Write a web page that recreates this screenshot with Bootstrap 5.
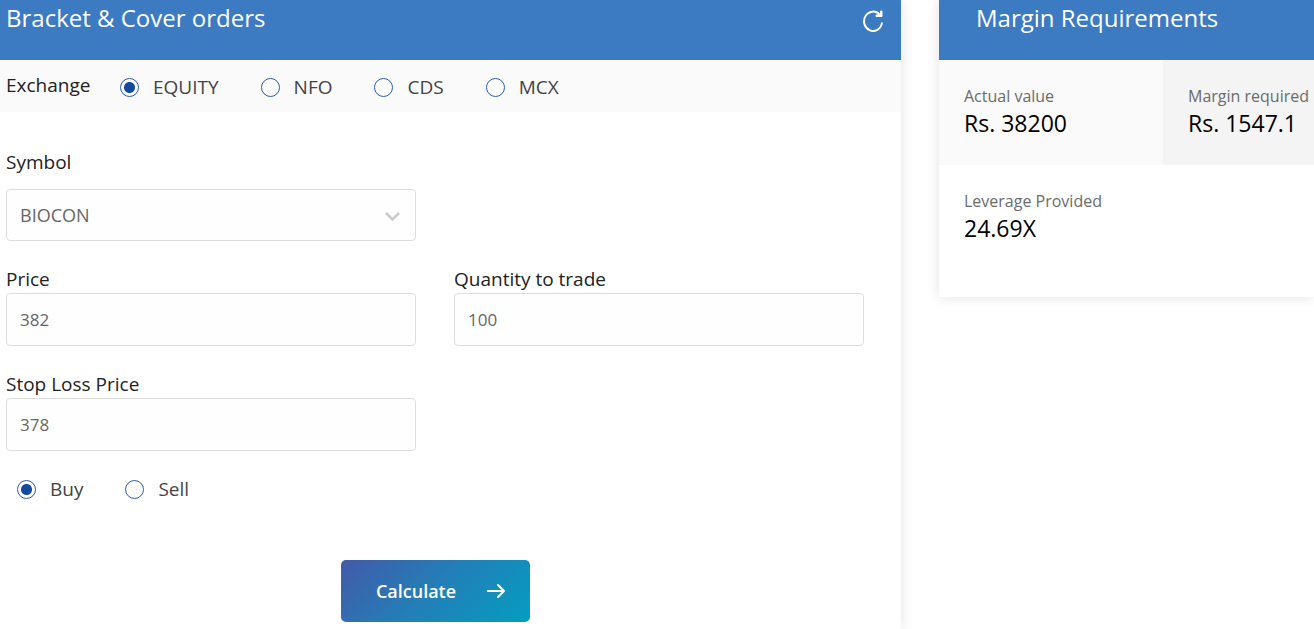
<!DOCTYPE html>
<html lang="en">
<head>
<meta charset="utf-8">
<meta name="viewport" content="width=device-width, initial-scale=1">
<title>Bracket &amp; Cover orders</title>
<link href="https://cdn.jsdelivr.net/npm/bootstrap@5.3.0/dist/css/bootstrap.min.css" rel="stylesheet">
<style>
  body { font-family: "Open Sans", "Noto Sans", sans-serif; font-size: 19px; line-height: 28px; color: #222; background: #fff; }
  .calc-page { display: grid; grid-template-columns: minmax(0, 901fr) minmax(0, 375fr); column-gap: 38px; min-height: 100vh; }
  .panel { background: #fff; box-shadow: 0 0 12px rgba(0, 0, 0, .12); }
  .panel-head { background: #3c7ac1; color: #fff; height: 60px; padding: 0 16px 0 6px; }
  .panel-head.results-head { padding-left: 37px; }
  .panel-head h1, .panel-head h2 { font-size: 24px; line-height: 36px; font-weight: 400; margin: 0; white-space: nowrap; }
  .reload-btn { width: 24px; height: 40px; }
  .exchange-bar { background: #fafafa; height: 52px; padding-left: 6px; }
  .exchange-bar legend { font-size: 19px; line-height: 50px; height: 52px; width: 114px; flex: none; }
  .choice-row { display: flex; flex-wrap: wrap; column-gap: 42px; }
  .exchange-bar .choice-row { padding-top: 2px; }
  .side-row { margin-top: 24px; padding-left: 11px; }
  .choice { display: flex; align-items: center; line-height: 28px; color: #444; }
  .choice input { margin: 0 14px 0 0; width: 19px; height: 19px; border: 1px solid #2a5db0; background-color: #fff; }
  .choice input:checked { background: #fff radial-gradient(circle, #144a9e 5px, transparent 6px); border-color: #2a5db0; }
  .order-form { padding: 36px 37px 0 6px; }
  .field-grid { display: grid; grid-template-columns: 1fr 1fr; gap: 24px 38px; }
  .field-grid label { display: block; line-height: 28px; }
  .field-grid .form-control, .field-grid .form-select { height: 53px; padding: 0 13px; border-color: #ddd; border-radius: 4px; font-size: 17px; color: #666; background-color: #fefefe; }
  .field-grid .form-select { height: 52px; margin-top: 13px; font-size: 18px; background-size: 17px 17px; background-position: right 14px center;
    background-image: url("data:image/svg+xml,%3Csvg xmlns='http://www.w3.org/2000/svg' viewBox='0 0 17 17'%3E%3Cpath d='M2 6l6.500 6.500L15 6' fill='none' stroke='%23ccc' stroke-width='2.600'/%3E%3C/svg%3E"); }
  .calc-action { margin-top: 57px; }
  .calc-btn, .calc-btn:hover { width: 189px; height: 62px; gap: 30px; padding: 0 12px 0 24px; border: 0; border-radius: 5px; color: #fff; font-size: 18px; font-weight: 600; background: linear-gradient(135deg, #435aa8, #2280b7 50%, #049dc0); }
  .results-grid { display: grid; grid-template-columns: 224fr 151fr; padding-bottom: 27px; }
  .result { height: 105px; padding: 22px 0 0 25px; white-space: nowrap; }
  .result dt { font-size: 16px; line-height: 28px; font-weight: 400; color: #6b6b6b; }
  .result dd { font-size: 23px; line-height: 26px; margin: 0; color: #000; }
  .tone-a { background: #fafafa; }
  .tone-b { background: #f4f4f4; }
</style>
</head>
<body>
<main class="calc-page overflow-hidden">
  <form class="panel">
    <header class="panel-head d-flex justify-content-between align-items-start">
      <h1>Bracket &amp; Cover orders</h1>
      <button type="reset" class="reload-btn btn p-0 border-0 text-white d-flex align-items-center justify-content-center" aria-label="Reset">
        <svg width="22" height="24" viewBox="0 0 22 24" fill="none" stroke="currentColor" stroke-width="2"><path d="M17.500 6.500A9 9.700 0 1 0 20 14.500"/><path d="M14 8.500H20V3H18.500V7H14Z" fill="currentColor" stroke-width="1"/></svg>
      </button>
    </header>
    <fieldset class="exchange-bar d-flex align-items-center">
      <legend class="float-start mb-0">Exchange</legend>
      <div class="choice-row">
        <label class="choice"><input class="form-check-input" type="radio" name="exchange" checked>EQUITY</label>
        <label class="choice"><input class="form-check-input" type="radio" name="exchange">NFO</label>
        <label class="choice"><input class="form-check-input" type="radio" name="exchange">CDS</label>
        <label class="choice"><input class="form-check-input" type="radio" name="exchange">MCX</label>
      </div>
    </fieldset>
    <div class="order-form">
      <div class="field-grid">
        <div><label for="symbol">Symbol</label><select id="symbol" class="form-select"><option>BIOCON</option></select></div>
        <div></div>
        <div><label for="price">Price</label><input id="price" class="form-control" type="text" value="382"></div>
        <div><label for="qty">Quantity to trade</label><input id="qty" class="form-control" type="text" value="100"></div>
        <div><label for="stop">Stop Loss Price</label><input id="stop" class="form-control" type="text" value="378"></div>
      </div>
      <div class="choice-row side-row">
        <label class="choice"><input class="form-check-input" type="radio" name="side" checked>Buy</label>
        <label class="choice"><input class="form-check-input" type="radio" name="side">Sell</label>
      </div>
      <div class="calc-action d-flex justify-content-center">
        <button type="button" class="calc-btn btn d-flex align-items-center justify-content-center">Calculate
          <svg width="20" height="18" viewBox="0 0 20 18" fill="none" stroke="currentColor" stroke-width="2" stroke-linecap="round" stroke-linejoin="round"><path d="M2 9h16M12 3l6 6-6 6"/></svg>
        </button>
      </div>
    </div>
  </form>
  <section class="panel align-self-start">
    <header class="panel-head results-head"><h2>Margin Requirements</h2></header>
    <dl class="results-grid mb-0">
      <div class="result tone-a"><dt>Actual value</dt><dd>Rs. 38200</dd></div>
      <div class="result tone-b"><dt>Margin required</dt><dd>Rs. 1547.1</dd></div>
      <div class="result"><dt>Leverage Provided</dt><dd>24.69X</dd></div>
    </dl>
  </section>
</main>
<script src="https://cdn.jsdelivr.net/npm/bootstrap@5.3.0/dist/js/bootstrap.bundle.min.js"></script>
</body>
</html>
